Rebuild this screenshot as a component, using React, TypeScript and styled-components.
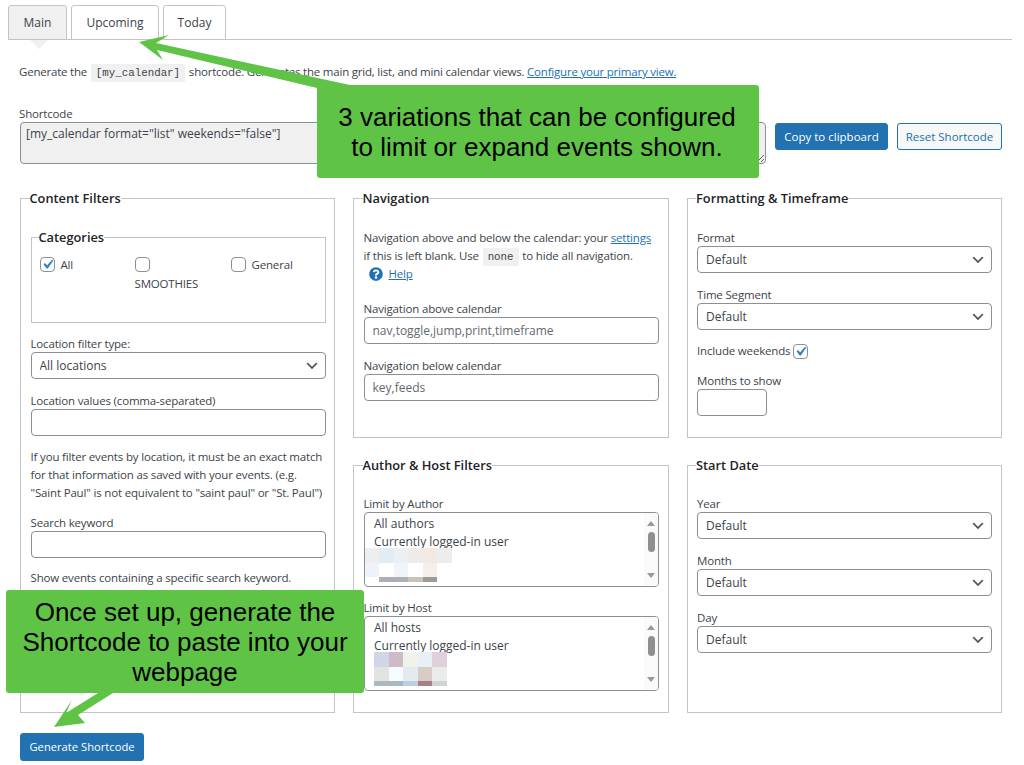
import styled, { createGlobalStyle } from "styled-components";
import { FaQuestionCircle } from "react-icons/fa";

const CHEVRON =
  "data:image/svg+xml;utf8,<svg xmlns='http://www.w3.org/2000/svg' width='20' height='20' viewBox='0 0 20 20'><path d='M5 6l5 5 5-5 2 1-7 7-7-7z' fill='%23555'/></svg>";
const CHECK =
  "data:image/svg+xml;utf8,<svg xmlns='http://www.w3.org/2000/svg' viewBox='0 0 20 20'><path d='M14.83 4.89l1.34.94-5.81 8.38H9.02L5.78 9.67l1.34-1.25 2.57 2.4z' fill='%233582c4'/></svg>";

// rótulos e parágrafos são mais estreitos que os controles no print
const EstiloGlobal = createGlobalStyle`
  * {
    box-sizing: border-box;
  }

  body {
    margin: 0;
    background: #fff;
    color: #3c434a;
    font-family: "Open Sans", "Noto Sans", sans-serif;
    font-size: 11.5px;
    letter-spacing: -0.17px;
    line-height: 18px;
  }
`;

const Pagina = styled.div`
  position: relative;
  width: 1024px;
  height: 765px;
  overflow: hidden;
  padding: 5px 12px 0 8px;
`;

const Abas = styled.nav`
  display: flex;
  gap: 4px;
  height: 35px;
  border-bottom: 1px solid #c3c4c7;
`;

const Aba = styled.div<{ $ativa?: boolean; $largura: number }>`
  position: relative;
  width: ${(p) => p.$largura}px;
  height: 35px;
  display: flex;
  align-items: center;
  justify-content: center;
  border: 1px solid #c3c4c7;
  border-radius: 3px 3px 0 0;
  background: ${(p) => (p.$ativa ? "#f0f0f1" : "#fff")};
  color: #3c434a;
  font-size: 12px;
  letter-spacing: 0;

  ${(p) =>
    p.$ativa &&
    `&::after {
      content: "";
      position: absolute;
      left: 21px;
      top: 34px;
      width: 0;
      height: 0;
      border-left: 9px solid transparent;
      border-right: 9px solid transparent;
      border-top: 9px solid #f0f0f1;
    }`}
`;

const Conteudo = styled.main`
  padding-left: 12px;
`;

const Intro = styled.p`
  margin: 23px 0 0 -1px;
  height: 18px;
  letter-spacing: -0.21px;
  white-space: nowrap;
`;

const Codigo = styled.code`
  display: inline-block;
  margin: 0 1px;
  padding: 0 5px;
  height: 18px;
  background: #f0f0f1;
  font-family: "Liberation Mono", monospace;
  font-size: 10.8px;
  letter-spacing: 0;
  line-height: 18px;
`;

const Link = styled.a`
  color: #2271b1;
  text-decoration: underline;
`;

const LinhaShortcode = styled.section`
  display: flex;
  align-items: flex-start;
  gap: 9px;
  margin-top: 24px;
`;

const BlocoShortcode = styled.div`
  width: 746px;

  label {
    margin-left: -1px;
  }
`;

const Rotulo = styled.label`
  display: block;
  height: 17px;
  line-height: 18px;
  white-space: nowrap;
`;

const AreaTexto = styled.textarea`
  display: block;
  width: 746px;
  height: 42px;
  margin: 0;
  padding: 2px 5px;
  border: 1px solid #8c8f94;
  border-radius: 4px;
  background: #f0f0f1;
  color: #3c434a;
  font: inherit;
  font-size: 12px;
  letter-spacing: 0;
`;

const Botoes = styled.div`
  display: flex;
  gap: 9px;
  padding-top: 18px;
`;

const Botao = styled.button<{ $secundario?: boolean; $largura: number }>`
  width: ${(p) => p.$largura}px;
  height: 27px;
  padding: 0;
  border: 1px solid #2271b1;
  border-radius: 3px;
  background: ${(p) => (p.$secundario ? "#f6f7f7" : "#2271b1")};
  color: ${(p) => (p.$secundario ? "#2271b1" : "#fff")};
  font: inherit;
  font-size: 11.5px;
`;

const Paineis = styled.div`
  display: grid;
  grid-template-columns: 315px 315.5px 315px;
  grid-template-rows: 249px 257px;
  gap: 18px;
  margin-top: 25px;
`;

const Painel = styled.fieldset<{ $alto?: boolean }>`
  grid-row: ${(p) => (p.$alto ? "span 2" : "auto")};
  min-width: 0;
  margin: 0;
  padding: 22px 8.5px 0 9.5px;
  border: 1px solid #c3c4c7;
  border-radius: 0;
`;

const Legenda = styled.legend`
  margin-left: -1px;
  padding: 0;
  height: 18px;
  color: #1d2327;
  font-size: 12.8px;
  font-weight: 600;
  letter-spacing: 0;
  line-height: 18px;
  white-space: nowrap;
`;

const Categorias = styled.fieldset`
  display: block;
  height: 95px;
  margin: -1px 0 0;
  min-width: 0;
  padding: 0 9px 0 8px;
  border: 1px solid #c3c4c7;
`;

const GradeCategorias = styled.div`
  display: grid;
  grid-template-columns: 95px 96px 1fr;
  padding-top: 9px;
`;

const ItemCategoria = styled.div`
  display: flex;
  flex-wrap: wrap;
  align-items: center;
  align-content: flex-start;
  gap: 0 6px;
  line-height: 19px;
`;

const Caixa = styled.span<{ $marcada?: boolean }>`
  display: inline-block;
  flex: none;
  width: 15px;
  height: 15px;
  margin: 2px 0;
  border: 1px solid #8c8f94;
  border-radius: 4px;
  background: #fff ${(p) => (p.$marcada ? `url("${CHECK}") center / 19px no-repeat` : "")};
`;

const QuebraLinha = styled.span`
  flex-basis: 100%;
`;

const Campo = styled.div<{ $topo?: number }>`
  margin-top: ${(p) => p.$topo ?? 11}px;
  padding-bottom: 1px;
`;

const Entrada = styled.input<{ $largura?: number }>`
  display: block;
  width: ${(p) => (p.$largura ? `${p.$largura}px` : "100%")};
  height: 27px;
  margin: 0;
  padding: 0 8px;
  border: 1px solid #8c8f94;
  border-radius: 4px;
  background: #fff;
  color: #3c434a;
  font: inherit;
  font-size: 12px;
  letter-spacing: 0;

  &::placeholder {
    color: #646970;
    opacity: 1;
  }
`;

const Selecao = styled.select`
  display: block;
  width: 100%;
  height: 27px;
  margin: 0;
  padding: 0 24px 0 8px;
  border: 1px solid #8c8f94;
  border-radius: 4px;
  background: #fff url("${CHEVRON}") right 5px top 50% / 16px 16px no-repeat;
  color: #3c434a;
  font: inherit;
  font-size: 12px;
  letter-spacing: 0;
  appearance: none;
`;

const Paragrafo = styled.p<{ $topo?: number }>`
  margin: ${(p) => p.$topo ?? 11}px 0 0;
  white-space: nowrap;
`;

const LinhaAjuda = styled.div`
  display: flex;
  align-items: center;
  gap: 6px;
  height: 19px;
  margin-top: -2px;
  padding-left: 5px;
  color: #2271b1;
  font-size: 14px;

  a {
    font-size: 11.5px;
  }
`;

const LinhaMarcar = styled.div`
  display: flex;
  align-items: center;
  gap: 3px;
  height: 18px;
  margin-top: 11px;
`;

const Lista = styled.div`
  display: flex;
  justify-content: space-between;
  height: 75px;
  border: 1px solid #8c8f94;
  border-radius: 4px;
  overflow: hidden;
`;

const Opcoes = styled.div`
  flex: 1;
  padding-top: 2px;
`;

const Opcao = styled.div`
  height: 18px;
  padding-left: 9.5px;
  font-size: 12px;
  letter-spacing: 0;
  line-height: 18px;
  white-space: nowrap;
`;

const Mosaico = styled.div<{ $recuo?: boolean }>`
  padding-left: ${(p) => (p.$recuo ? 9.5 : 0)}px;
  margin-top: -3px;
`;

const FaixaMosaico = styled.div<{ $altura: number }>`
  display: flex;
  height: ${(p) => p.$altura}px;
`;

const Pixel = styled.span<{ $cor: string }>`
  width: 14.6px;
  background: ${(p) => p.$cor};
`;

const BarraRolagem = styled.div`
  flex: none;
  width: 14px;
  display: flex;
  flex-direction: column;
  align-items: center;
  padding: 8px 0;
  background: #fafafa;
`;

const SetaRolagem = styled.span<{ $baixo?: boolean }>`
  width: 0;
  height: 0;
  border-left: 4px solid transparent;
  border-right: 4px solid transparent;
  ${(p) => (p.$baixo ? "border-top: 5px solid #9a9a9a; margin-top: auto;" : "border-bottom: 5px solid #9a9a9a;")}
`;

const Polegar = styled.span`
  width: 7px;
  height: 20px;
  margin-top: 6px;
  border-radius: 4px;
  background: #8f8f8f;
`;

const BotaoGerar = styled(Botao)`
  display: block;
  height: 28px;
  margin-top: 20px;
  font-size: 11.2px;
`;

const Balao = styled.div<{ $x: number; $y: number; $l: number; $a: number; $folga?: number }>`
  position: absolute;
  left: ${(p) => p.$x}px;
  top: ${(p) => p.$y}px;
  width: ${(p) => p.$l}px;
  height: ${(p) => p.$a}px;
  display: flex;
  align-items: center;
  justify-content: center;
  padding-right: ${(p) => p.$folga ?? 0}px;
  text-align: center;
  border-radius: 3px;
  background: #5fc446;
  color: #000;
  font-family: "Liberation Sans", Arial, sans-serif;
  font-size: 26px;
  letter-spacing: 0;
  line-height: 30px;
`;

const Setas = styled.svg`
  position: absolute;
  left: 0;
  top: 0;
  pointer-events: none;
`;

type ListaProps = {
  opcoes: string[];
  faixas: { altura: number; cores: string[] }[];
  recuo?: boolean;
};

function ListaBorrada({ opcoes, faixas, recuo }: ListaProps) {
  return (
    <Lista>
      <Opcoes>
        {opcoes.map((o) => (
          <Opcao key={o}>{o}</Opcao>
        ))}
        <Mosaico $recuo={recuo}>
          {faixas.map((f, i) => (
            <FaixaMosaico key={i} $altura={f.altura}>
              {f.cores.map((c, j) => (
                <Pixel key={j} $cor={c} />
              ))}
            </FaixaMosaico>
          ))}
        </Mosaico>
      </Opcoes>
      <BarraRolagem>
        <SetaRolagem />
        <Polegar />
        <SetaRolagem $baixo />
      </BarraRolagem>
    </Lista>
  );
}

// nomes dos autores vêm borrados no print, então só as cores
const AUTORES = [
  { altura: 15, cores: ["#eeeeee", "#e0edf5", "#edf0f2", "#eeecea", "#f3e9e0", "#ecedec"] },
  { altura: 14, cores: ["#eef2f9", "#ffffff", "#f1f5f9", "#ffffff", "#f4efea"] },
  { altura: 5, cores: ["#ffffff", "#b0acb4", "#acb2b3", "#c9c2b6", "#9b9b98"] },
];

const ANFITRIOES = [
  { altura: 15, cores: ["#d0d6e6", "#cdbcc8", "#f0f2ec", "#e8eff7", "#dfd0dc"] },
  { altura: 14, cores: ["#e3e3e1", "#f5fbff", "#e3eaf2", "#d9cbc6", "#eaeceb"] },
  { altura: 5, cores: ["#adb9c0", "#a9b8c2", "#bcd0e2", "#aa8084", "#d2d3d5"] },
];

function CampoSelecao({ rotulo, valor, topo }: { rotulo: string; valor: string; topo?: number }) {
  return (
    <Campo $topo={topo}>
      <Rotulo>{rotulo}</Rotulo>
      <Selecao defaultValue={valor}>
        <option>{valor}</option>
      </Selecao>
    </Campo>
  );
}

export default function App() {
  return (
    <>
      <EstiloGlobal />
      <Pagina>
        <Abas>
          <Aba $ativa $largura={59}>Main</Aba>
          <Aba $largura={88}>Upcoming</Aba>
          <Aba $largura={63}>Today</Aba>
        </Abas>

        <Conteudo>
          <Intro>
            Generate the <Codigo>[my_calendar]</Codigo> shortcode. Generates the main grid, list, and mini calendar views.{" "}
            <Link href="#">Configure your primary view.</Link>
          </Intro>

          <LinhaShortcode>
            <BlocoShortcode>
              <Rotulo>Shortcode</Rotulo>
              <AreaTexto readOnly value={'[my_calendar format="list" weekends="false"]'} />
            </BlocoShortcode>
            <Botoes>
              <Botao $largura={113}>Copy to clipboard</Botao>
              <Botao $secundario $largura={105}>Reset Shortcode</Botao>
            </Botoes>
          </LinhaShortcode>

          <Paineis>
            <Painel $alto>
              <Legenda>Content Filters</Legenda>
              <Categorias>
                <Legenda>Categories</Legenda>
                <GradeCategorias>
                  <ItemCategoria>
                    <Caixa $marcada />
                    All
                  </ItemCategoria>
                  <ItemCategoria>
                    <Caixa />
                    <QuebraLinha />
                    SMOOTHIES
                  </ItemCategoria>
                  <ItemCategoria>
                    <Caixa />
                    General
                  </ItemCategoria>
                </GradeCategorias>
              </Categorias>
              <CampoSelecao topo={12} rotulo="Location filter type:" valor="All locations" />
              <Campo $topo={12}>
                <Rotulo>Location values (comma-separated)</Rotulo>
                <Entrada />
              </Campo>
              <Paragrafo>
                If you filter events by location, it must be an exact match
                <br />
                for that information as saved with your events. (e.g.
                <br />
                "Saint Paul" is not equivalent to "saint paul" or "St. Paul")
              </Paragrafo>
              <Campo $topo={12}>
                <Rotulo>Search keyword</Rotulo>
                <Entrada />
              </Campo>
              <Paragrafo $topo={10}>Show events containing a specific search keyword.</Paragrafo>
            </Painel>

            <Painel>
              <Legenda>Navigation</Legenda>
              <Paragrafo $topo={0}>
                Navigation above and below the calendar: your <Link href="#">settings</Link>
                <br />
                if this is left blank. Use <Codigo>none</Codigo> to hide all navigation.
              </Paragrafo>
              <LinhaAjuda>
                <FaQuestionCircle />
                <Link href="#">Help</Link>
              </LinhaAjuda>
              <Campo $topo={17}>
                <Rotulo>Navigation above calendar</Rotulo>
                <Entrada placeholder="nav,toggle,jump,print,timeframe" />
              </Campo>
              <Campo $topo={12}>
                <Rotulo>Navigation below calendar</Rotulo>
                <Entrada placeholder="key,feeds" />
              </Campo>
            </Painel>

            <Painel>
              <Legenda>Formatting &amp; Timeframe</Legenda>
              <CampoSelecao topo={0} rotulo="Format" valor="Default" />
              <CampoSelecao topo={12} rotulo="Time Segment" valor="Default" />
              <LinhaMarcar>
                Include weekends
                <Caixa $marcada />
              </LinhaMarcar>
              <Campo $topo={12}>
                <Rotulo>Months to show</Rotulo>
                <Entrada $largura={70} />
              </Campo>
            </Painel>

            <Painel>
              <Legenda>Author &amp; Host Filters</Legenda>
              <Campo $topo={-1}>
                <Rotulo>Limit by Author</Rotulo>
                <ListaBorrada opcoes={["All authors", "Currently logged-in user"]} faixas={AUTORES} />
              </Campo>
              <Campo $topo={11}>
                <Rotulo>Limit by Host</Rotulo>
                <ListaBorrada opcoes={["All hosts", "Currently logged-in user"]} faixas={ANFITRIOES} recuo />
              </Campo>
            </Painel>

            <Painel>
              <Legenda>Start Date</Legenda>
              <CampoSelecao topo={-1} rotulo="Year" valor="Default" />
              <CampoSelecao topo={12} rotulo="Month" valor="Default" />
              <CampoSelecao topo={12} rotulo="Day" valor="Default" />
            </Painel>
          </Paineis>

          <BotaoGerar $largura={124}>Generate Shortcode</BotaoGerar>
        </Conteudo>

        <Setas width="1024" height="765" viewBox="0 0 1024 765">
          <path d="M139 42 L169 35 L156 43 L350 85 L317 88 L157 50 L163 60 Z" fill="#5fc446" />
          <path d="M54 727 L72 700 L66 713 L98 693 L113 693 L78 715 L85 723 Z" fill="#5fc446" />
        </Setas>

        <Balao $x={317} $y={85} $l={442} $a={93} $folga={2}>
          3 variations that can be configured
          <br />
          to limit or expand events shown.
        </Balao>
        <Balao $x={6} $y={590} $l={358} $a={103}>
          Once set up, generate the
          <br />
          Shortcode to paste into your
          <br />
          webpage
        </Balao>
      </Pagina>
    </>
  );
}
